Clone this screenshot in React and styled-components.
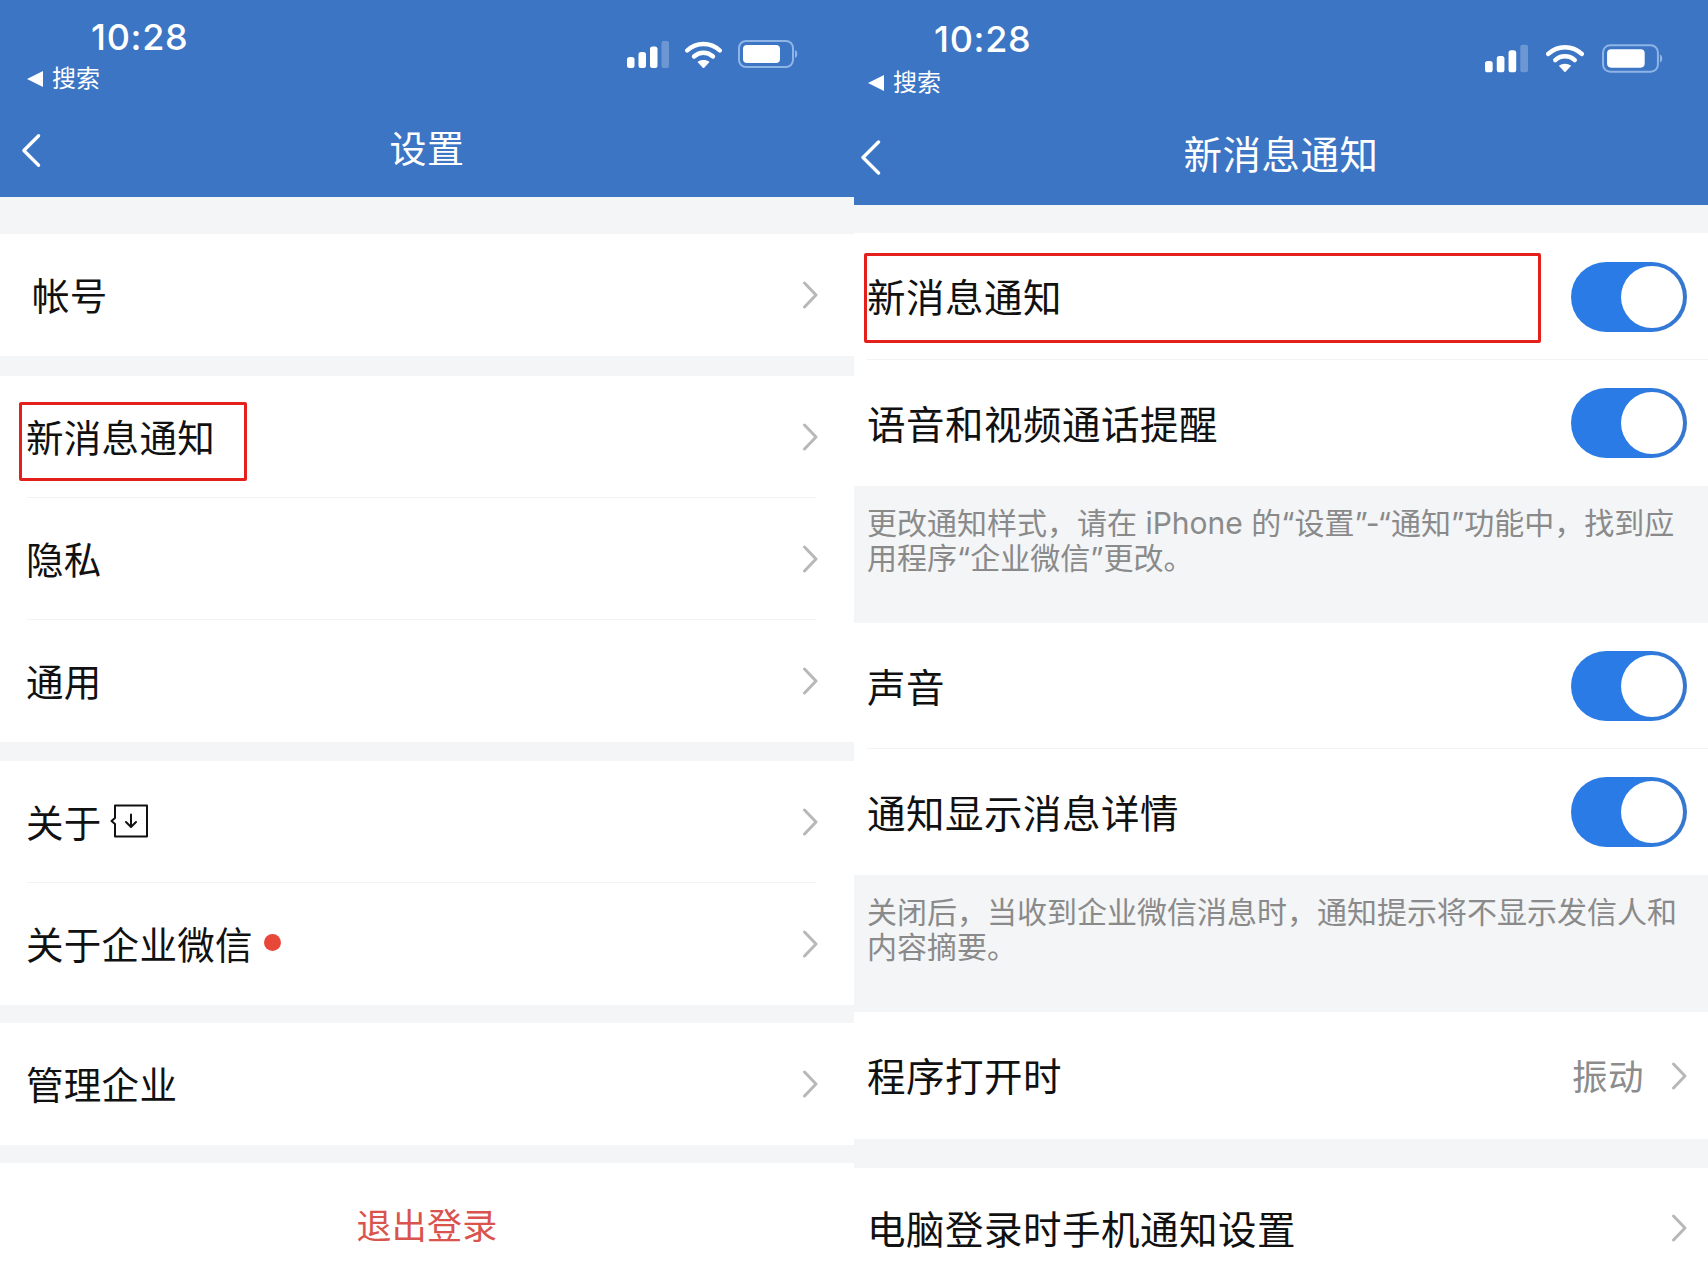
import React from "react";
import styled, { createGlobalStyle } from "styled-components";

const Global = createGlobalStyle`
  html, body { margin: 0; padding: 0; background: #fff; }
  body { font-family: "Inter", "Noto Sans CJK SC", sans-serif; }
`;

const Page = styled.div`
  display: grid;
  grid-template-columns: 854px 854px;
  width: 1708px;
  height: 1280px;
  overflow: hidden;
`;
const Phone = styled.section`
  display: flex;
  flex-direction: column;
  height: 1280px;
  overflow: hidden;
  background: #f3f5f7;
  color: #111;
`;
const Header = styled.header`
  flex: none;
  height: ${p => p.$h}px;
  background: #3b75c4;
  color: #fff;
  display: flex;
  flex-direction: column;
  padding-top: ${p => p.$top}px;
  box-sizing: border-box;
`;
const StatusBar = styled.div`
  display: flex;
  justify-content: space-between;
  height: ${p => p.$h}px;
  padding: 0 ${p => p.$right}px 0 ${p => p.$left}px;
`;
const StatusLeft = styled.div`
  display: flex;
  flex-direction: column;
  align-items: flex-start;
`;
const Time = styled.div`
  font-size: 36px;
  line-height: 36px;
  font-weight: 500;
  letter-spacing: 0.7px;
  margin-left: ${p => p.$indent}px;
`;
const SearchBack = styled.div`
  display: flex;
  align-items: center;
  gap: 9px;
  font-size: 24px;
  line-height: 30px;
  margin-top: ${p => p.$mt}px;
`;
const Triangle = styled.span`
  width: 0;
  height: 0;
  border-top: 8px solid transparent;
  border-bottom: 8px solid transparent;
  border-right: 16px solid #fff;
`;
const StatusIcons = styled.div`
  display: flex;
  align-items: center;
  gap: ${p => p.$gap}px;
  height: 30px;
  margin-top: ${p => p.$mt}px;
`;
const NavBar = styled.div`
  position: relative;
  display: flex;
  align-items: center;
  justify-content: center;
  height: 44px;
  margin-top: ${p => p.$mt}px;
`;
const BackButton = styled.span`
  position: absolute;
  left: ${p => p.$x}px;
  top: ${p => p.$y}px;
  display: flex;
`;
const Title = styled.h1`
  margin: 0;
  font-size: ${p => p.$size}px;
  font-weight: 400;
  line-height: 44px;
  letter-spacing: 0.5px;
`;
const Group = styled.div`
  flex: ${p => (p.$grow ? 1 : "none")};
  background: #fff;
  margin-top: ${p => p.$gap}px;
`;
const Row = styled.div`
  position: relative;
  display: flex;
  align-items: center;
  height: ${p => p.$h}px;
  padding: 0 ${p => p.$pr}px 0 ${p => p.$pl}px;
  box-sizing: border-box;
  font-size: ${p => p.$size}px;
  letter-spacing: ${p => p.$track}px;
  &::after {
    content: "";
    display: ${p => (p.$line ? "block" : "none")};
    position: absolute;
    left: ${p => p.$pl}px;
    right: ${p => (p.$lineFull ? 0 : 38)}px;
    bottom: 0;
    height: 1.5px;
    background: #f3f3f4;
  }
`;
const Label = styled.span`
  flex: 1;
  display: flex;
  align-items: center;
  white-space: nowrap;
  margin-top: -3px;
  margin-left: ${p => p.$dx || 0}px;
`;
const Dot = styled.span`
  width: 17px;
  height: 17px;
  margin-left: 11px;
  border-radius: 50%;
  background: #e8483a;
`;
const Value = styled.span`
  font-size: 35.5px;
  color: #8c8c8c;
  margin-right: 27px;
  margin-top: -2px;
`;
const Highlight = styled.span`
  position: absolute;
  left: ${p => p.$x}px;
  top: ${p => p.$y}px;
  width: ${p => p.$w}px;
  height: ${p => p.$h}px;
  box-sizing: border-box;
  border: 3px solid #e4201c;
  border-radius: 2px;
`;
const Track = styled.span`
  flex: none;
  display: flex;
  justify-content: flex-end;
  align-items: center;
  width: 116px;
  height: 70px;
  padding-right: 4px;
  box-sizing: border-box;
  border-radius: 35px;
  background: linear-gradient(90deg, #2b7be6 55%, #3877cc 100%);
`;
const Knob = styled.span`
  width: 62px;
  height: 62px;
  border-radius: 50%;
  background: #fff;
`;
const Note = styled.p`
  flex: none;
  margin: 0;
  height: ${p => p.$h}px;
  padding: 20px 20px 0 13px;
  box-sizing: border-box;
  font-size: 30px;
  line-height: 35px;
  color: #8a8a8a;
  white-space: nowrap;
`;
const Logout = styled.div`
  text-align: center;
  color: #d9534f;
  font-size: 35px;
  letter-spacing: 0.3px;
  line-height: 126px;
`;

const Signal = ({ w, h }) => (
  <svg width={w} height={h} viewBox="0 0 42 27">
    <rect x="0" y="16" width="7.5" height="11" rx="2.5" fill="#fff" />
    <rect x="11.5" y="11" width="7.5" height="16" rx="2.5" fill="#fff" />
    <rect x="23" y="5.5" width="7.5" height="21.5" rx="2.5" fill="#fff" />
    <rect x="34.5" y="0" width="7.5" height="27" rx="2" fill="#fff" opacity="0.25" />
  </svg>
);
const Wifi = ({ w, h }) => (
  <svg width={w} height={h} viewBox="0 0 37 27" fill="none">
    <path d="M2.2 9.5C11.5 0.8 25.5 0.8 34.8 9.5" stroke="#fff" strokeWidth="4.4" strokeLinecap="round" />
    <path d="M9 15.5C14.5 10.5 22.5 10.5 28 15.5" stroke="#fff" strokeWidth="4.4" strokeLinecap="round" />
    <path d="M12.5 21 C16 18.4 21 18.4 24.5 21 L18.5 27.5 Z" fill="#fff" />
  </svg>
);
const Battery = ({ w, h }) => (
  <svg width={w} height={h} viewBox="0 0 60 28" fill="none">
    <rect x="1" y="1" width="54" height="26" rx="7" stroke="#8fb4e6" strokeWidth="2" />
    <rect x="5" y="5" width="37" height="18" rx="4" fill="#fff" />
    <path d="M57 10C60 11 60 17 57 18Z" fill="#8fb4e6" />
  </svg>
);
const BackIcon = ({ w, h }) => (
  <svg width={w} height={h} viewBox="0 0 21 35" fill="none">
    <path d="M18.5 2L3 17.5L18.5 33" stroke="#fff" strokeWidth="3.4" strokeLinecap="round" strokeLinejoin="round" />
  </svg>
);
const Chevron = () => (
  <svg width="16" height="28" viewBox="0 0 16 28" fill="none">
    <path d="M2.5 2L14 14L2.5 26" stroke="#b8b8b8" strokeWidth="3" strokeLinecap="round" strokeLinejoin="round" />
  </svg>
);
const BoxIcon = () => (
  <svg width="38" height="34" viewBox="0 0 38 34" fill="none" style={{ marginLeft: 8 }}>
    <path d="M5 1.5H37V32.5H5V20L1.5 17L5 14Z" stroke="#111" strokeWidth="2" strokeLinejoin="round" />
    <path d="M21 10.5V22.5M16 18L21 23L26 18" stroke="#111" strokeWidth="2" strokeLinecap="round" strokeLinejoin="round" />
  </svg>
);
const Toggle = () => (
  <Track>
    <Knob />
  </Track>
);

const MenuRow = ({ children, h = 122, line, mark, dx = -1 }) => (
  <Row $h={h} $pl={27} $pr={36} $size={37.5} $track={0.3} $line={line}>
    <Label $dx={dx}>{children}</Label>
    <Chevron />
    {mark}
  </Row>
);
const SettingRow = ({ children, h = 126, line, mark, tail }) => (
  <Row $h={h} $pl={13} $pr={21} $size={38.5} $track={0.5} $line={line} $lineFull>
    <Label>{children}</Label>
    {tail}
    {mark}
  </Row>
);

export default function App() {
  return (
    <>
      <Global />
      <Page>
        <Phone>
          <Header $h={197} $top={19}>
            <StatusBar $h={71} $left={27} $right={56}>
              <StatusLeft>
                <Time $indent={64}>10:28</Time>
                <SearchBack $mt={9}>
                  <Triangle />
                  搜索
                </SearchBack>
              </StatusLeft>
              <StatusIcons $gap={16} $mt={20}>
                <Signal w={42} h={27} />
                <Wifi w={37} h={27} />
                <Battery w={60} h={28} />
              </StatusIcons>
            </StatusBar>
            <NavBar $mt={38}>
              <BackButton $x={21} $y={5}>
                <BackIcon w={20} h={35} />
              </BackButton>
              <Title $size={37}>设置</Title>
            </NavBar>
          </Header>

          <Group $gap={37}>
            <MenuRow dx={5}>帐号</MenuRow>
          </Group>
          <Group $gap={20}>
            <MenuRow line mark={<Highlight $x={19} $y={26} $w={228} $h={79} />}>新消息通知</MenuRow>
            <MenuRow line>隐私</MenuRow>
            <MenuRow>通用</MenuRow>
          </Group>
          <Group $gap={19}>
            <MenuRow line>关于<BoxIcon /></MenuRow>
            <MenuRow>关于企业微信<Dot /></MenuRow>
          </Group>
          <Group $gap={18}>
            <MenuRow>管理企业</MenuRow>
          </Group>
          <Group $gap={18} $grow>
            <Logout>退出登录</Logout>
          </Group>
        </Phone>

        <Phone>
          <Header $h={205} $top={21}>
            <StatusBar $h={75} $left={14} $right={45}>
              <StatusLeft>
                <Time $indent={66}>10:28</Time>
                <SearchBack $mt={11}>
                  <Triangle />
                  搜索
                </SearchBack>
              </StatusLeft>
              <StatusIcons $gap={18} $mt={22}>
                <Signal w={43} h={29} />
                <Wifi w={38} h={28} />
                <Battery w={61} h={29} />
              </StatusIcons>
            </StatusBar>
            <NavBar $mt={37}>
              <BackButton $x={6} $y={7}>
                <BackIcon w={21} h={35} />
              </BackButton>
              <Title $size={38.5}>新消息通知</Title>
            </NavBar>
          </Header>

          <Group $gap={28}>
            <SettingRow h={127} line tail={<Toggle />} mark={<Highlight $x={10} $y={20} $w={677} $h={90} />}>新消息通知</SettingRow>
            <SettingRow tail={<Toggle />}>语音和视频通话提醒</SettingRow>
          </Group>
          <Note $h={137}>
            更改通知样式，请在 iPhone 的“设置”-“通知”功能中，找到应
            <br />
            用程序“企业微信”更改。
          </Note>
          <Group $gap={0}>
            <SettingRow line tail={<Toggle />}>声音</SettingRow>
            <SettingRow tail={<Toggle />}>通知显示消息详情</SettingRow>
          </Group>
          <Note $h={137}>
            关闭后，当收到企业微信消息时，通知提示将不显示发信人和
            <br />
            内容摘要。
          </Note>
          <Group $gap={0}>
            <SettingRow h={127} tail={<><Value>振动</Value><Chevron /></>}>程序打开时</SettingRow>
          </Group>
          <Group $gap={29}>
            <SettingRow h={120} tail={<Chevron />}>电脑登录时手机通知设置</SettingRow>
          </Group>
        </Phone>
      </Page>
    </>
  );
}
